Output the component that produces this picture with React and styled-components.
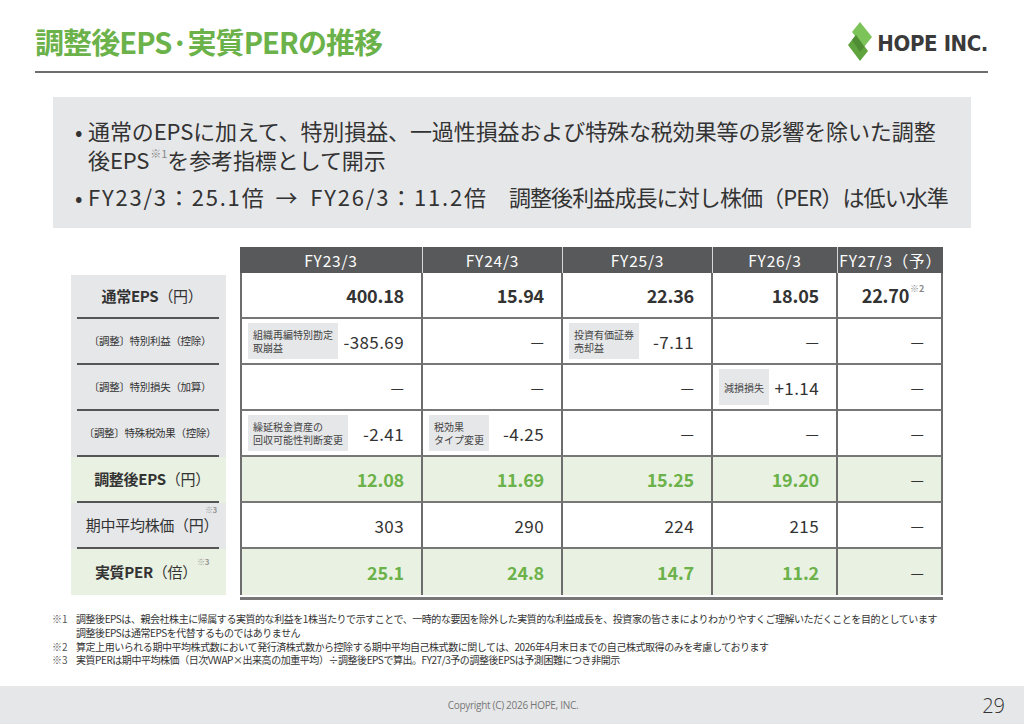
import React from "react";
import styled, { createGlobalStyle } from "styled-components";

const GlobalStyle = createGlobalStyle`
  html, body { margin: 0; padding: 0; background: #fff; }
  body { font-family: "Noto Sans CJK JP", "Noto Sans", sans-serif; color: #333; }
  * { box-sizing: border-box; }
`;

const GREEN = "#6cb24a";
const GRAY_BG = "#e6e7e9";
const GREEN_BG = "#e9f1e2";
const LINE = "#6d6d6d";

const Page = styled.div`
  width: 1024px;
  height: 724px;
  overflow: hidden;
  display: flex;
  flex-direction: column;
  background: #fff;
`;

const Header = styled.header`
  display: flex;
  align-items: center;
  justify-content: space-between;
  height: 38px;
  margin: 22px 36px 0 35px;
`;

const Title = styled.h1`
  margin: 0;
  font-size: 29px;
  line-height: 38px;
  font-weight: 700;
  color: ${GREEN};
  letter-spacing: -0.9px;
`;

const Logo = styled.div`
  display: flex;
  align-items: center;
  gap: 3px;
  margin-top: 1px;
`;

const LogoText = styled.span`
  font-family: "DejaVu Sans Condensed", "DejaVu Sans", sans-serif;
  font-stretch: condensed;
  font-weight: 700;
  font-size: 22px;
  letter-spacing: -0.4px;
  color: #3a3a3a;
  margin-top: 4px;
`;

const Rule = styled.div`
  height: 2px;
  background: ${LINE};
  margin: 11px 36px 0 35px;
`;

const Summary = styled.section`
  margin: 24px 53px 0 53px;
  height: 131px;
  background: ${GRAY_BG};
  padding: 19px 0 0 22px;
  display: flex;
  flex-direction: column;
  gap: 8px;
`;

const BulletItem = styled.div`
  display: flex;
  font-size: 22px;
  line-height: 29px;
  color: #333;
  white-space: nowrap;
  letter-spacing: -0.1px;
`;

const BulletMark = styled.span`
  width: 13px;
  flex: none;
`;

const Wide = styled.span`
  letter-spacing: 1.8px;
`;

const Tight = styled.span`
  letter-spacing: -0.9px;
`;

const Arrow = styled.span`
  padding: 0 13px 0 10px;
`;

const Sup = styled.sup`
  font-size: ${(p) => p.$size || 10}px;
  color: #888;
  vertical-align: top;
  line-height: 1;
  position: relative;
  top: ${(p) => p.$top || 4}px;
  margin-left: 1px;
`;

const TableArea = styled.section`
  display: flex;
  margin: 19px 0 0 71px;
`;

const LabelColumn = styled.div`
  width: 155px;
  margin: 28px 14px 0 0;
  display: flex;
  flex-direction: column;
`;

const LabelRow = styled.div`
  height: ${(p) => (p.$first ? 44 : 46)}px;
  background: ${(p) => (p.$green ? GREEN_BG : GRAY_BG)};
  padding: 0 7px 0 6px;
`;

const LabelInner = styled.div`
  height: 100%;
  display: flex;
  align-items: center;
  justify-content: center;
  position: relative;
  padding-left: ${(p) => (p.$small ? 4 : 8)}px;
  border-bottom: ${(p) => (p.$last ? "none" : "2px solid #555")};
  font-size: ${(p) => (p.$small ? 10.5 : 15)}px;
  line-height: 1.2;
  letter-spacing: -0.3px;
  color: #333;
  white-space: nowrap;
`;

const LabelStrong = styled.span`
  font-weight: 700;
`;

const LabelSupInline = styled.span`
  align-self: flex-start;
  font-size: 8px;
  line-height: 1;
  font-weight: 700;
  color: #999;
  margin-top: 9px;
  margin-left: 0;
`;

const LabelSupAbove = styled.span`
  position: absolute;
  right: 2px;
  top: 3px;
  font-size: 8px;
  line-height: 1;
  font-weight: 700;
  color: #999;
`;

const DataWrap = styled.div`
  width: 703px;
  padding-bottom: 2px;
  border-bottom: 3px solid #777;
`;

const DataGrid = styled.div`
  display: grid;
  grid-template-columns: 183px 140px 150px 125px 105px;
  grid-auto-rows: 46px;
  grid-template-rows: 26px;
`;

const HeadCell = styled.div`
  background: #58595b;
  color: #fff;
  font-size: 15.5px;
  letter-spacing: 0.8px;
  display: flex;
  align-items: center;
  justify-content: center;
  border-right: ${(p) => (p.$last ? "none" : "1px solid #d8d8d8")};
  white-space: nowrap;
`;

const Cell = styled.div`
  background: ${(p) => (p.$green ? GREEN_BG : "#fff")};
  border-right: 2px solid ${LINE};
  border-left: ${(p) => (p.$first ? `2px solid ${LINE}` : "none")};
  border-bottom: ${(p) => (p.$last ? "none" : `2px solid #777`)};
  display: flex;
  align-items: center;
  justify-content: ${(p) => (p.$tag ? "space-between" : "flex-end")};
  padding: 0 17px 0 6px;
  white-space: nowrap;
`;

const Tag = styled.span`
  background: ${GRAY_BG};
  font-size: 10px;
  line-height: 13px;
  color: #444;
  padding: 0 5px;
  height: 36px;
  display: flex;
  flex-direction: column;
  justify-content: center;
`;

const Value = styled.span`
  font-size: ${(p) => (p.$bold ? 18 : 17)}px;
  font-weight: ${(p) => (p.$bold ? 700 : 400)};
  color: ${(p) => (p.$green ? GREEN : "#333")};
  letter-spacing: ${(p) => (p.$bold ? "-0.2px" : "0.4px")};
`;

const Dash = styled.span`
  font-size: 15px;
  color: #333;
`;

const Notes = styled.section`
  margin: 12px 0 0 52px;
  display: flex;
  flex-direction: column;
`;

const Note = styled.div`
  display: flex;
  font-size: 10px;
  line-height: 13.8px;
  letter-spacing: -0.45px;
  color: #333;
  white-space: nowrap;
`;

const NoteMark = styled.span`
  width: 24px;
  flex: none;
  color: #555;
  letter-spacing: 0;
`;

const Footer = styled.footer`
  margin-top: auto;
  height: 38px;
  background: ${GRAY_BG};
  display: flex;
  align-items: center;
  justify-content: center;
  position: relative;
`;

const Copyright = styled.span`
  font-family: "Open Sans", "Noto Sans", sans-serif;
  font-size: 10px;
  letter-spacing: -0.3px;
  color: #777;
  margin-left: 2px;
`;

const PageNum = styled.span`
  position: absolute;
  right: 19px;
  top: 6px;
  font-family: "Open Sans", "Noto Sans", sans-serif;
  font-size: 20px;
  font-weight: 300;
  color: #333;
`;

const LogoMark = () => (
  <svg width="28" height="40" viewBox="0 0 28 40">
    <polygon points="14,0 26,15 18,25 6,10" fill="#7cc35a" />
    <polygon points="2,23 10,13 22,29 14,39" fill="#5fa43e" />
    <polygon points="10,13 18,25 14,30 6,18" fill="#4f8c33" />
  </svg>
);

const columns = ["FY23/3", "FY24/3", "FY25/3", "FY26/3", "FY27/3（予）"];
const D = { dash: true };

const rows = [
  {
    label: <><LabelStrong>通常EPS</LabelStrong>（円）</>,
    type: "base",
    cells: [{ v: "400.18" }, { v: "15.94" }, { v: "22.36" }, { v: "18.05" }, { v: "22.70", sup: "※2" }],
  },
  {
    label: "〔調整〕特別利益（控除）",
    type: "adj",
    cells: [{ tag: ["組織再編特別勘定", "取崩益"], v: "-385.69" }, D, { tag: ["投資有価証券", "売却益"], v: "-7.11" }, D, D],
  },
  {
    label: "〔調整〕特別損失（加算）",
    type: "adj",
    cells: [D, D, D, { tag: ["減損損失"], v: "+1.14" }, D],
  },
  {
    label: "〔調整〕特殊税効果（控除）",
    type: "adj",
    cells: [{ tag: ["繰延税金資産の", "回収可能性判断変更"], v: "-2.41" }, { tag: ["税効果", "タイプ変更"], v: "-4.25" }, D, D, D],
  },
  {
    label: <><LabelStrong>調整後EPS</LabelStrong>（円）</>,
    type: "green",
    cells: [{ v: "12.08" }, { v: "11.69" }, { v: "15.25" }, { v: "19.20" }, D],
  },
  {
    label: "期中平均株価（円）",
    type: "price",
    sup: "above",
    cells: [{ v: "303" }, { v: "290" }, { v: "224" }, { v: "215" }, D],
  },
  {
    label: <><LabelStrong>実質PER</LabelStrong>（倍）</>,
    type: "green",
    sup: "inline",
    cells: [{ v: "25.1" }, { v: "24.8" }, { v: "14.7" }, { v: "11.2" }, D],
  },
];

const notes = [
  ["※1", ["調整後EPSは、親会社株主に帰属する実質的な利益を1株当たりで示すことで、一時的な要因を除外した実質的な利益成長を、投資家の皆さまによりわかりやすくご理解いただくことを目的としています", "調整後EPSは通常EPSを代替するものではありません"]],
  ["※2", ["算定上用いられる期中平均株式数において発行済株式数から控除する期中平均自己株式数に関しては、2026年4月末日までの自己株式取得のみを考慮しております"]],
  ["※3", ["実質PERは期中平均株価（日次VWAP×出来高の加重平均）÷調整後EPSで算出。FY27/3予の調整後EPSは予測困難につき非開示"]],
];

function DataCell({ c, row, ci, ri }) {
  const green = row.type === "green";
  const bold = row.type === "base" || green;
  const last = ri === rows.length - 1;
  return (
    <Cell $green={green} $first={ci === 0} $last={last} $tag={!!c.tag}>
      {c.tag && (
        <Tag>
          {c.tag.map((t) => (
            <span key={t}>{t}</span>
          ))}
        </Tag>
      )}
      {c.dash ? (
        <Dash>—</Dash>
      ) : (
        <Value $bold={bold} $green={green}>
          {c.v}
          {c.sup && <Sup $size={9} $top={2}>{c.sup}</Sup>}
        </Value>
      )}
    </Cell>
  );
}

export default function App() {
  return (
    <Page>
      <GlobalStyle />
      <Header>
        <Title>調整後EPS·実質PERの推移</Title>
        <Logo>
          <LogoMark />
          <LogoText>HOPE INC.</LogoText>
        </Logo>
      </Header>
      <Rule />

      <Summary>
        <BulletItem>
          <BulletMark>•</BulletMark>
          <div>
            通常のEPSに加えて、特別損益、一過性損益および特殊な税効果等の影響を除いた調整
            <br />
            後EPS<Sup $size={11} $top={3}>※1</Sup>を参考指標として開示
          </div>
        </BulletItem>
        <BulletItem>
          <BulletMark>•</BulletMark>
          <div>
            <Wide>FY23/3：25.1倍</Wide>
            <Arrow>→</Arrow>
            <Wide>FY26/3：11.2倍</Wide>
            <Tight>　調整後利益成長に対し株価（PER）は低い水準</Tight>
          </div>
        </BulletItem>
      </Summary>

      <TableArea>
        <LabelColumn>
          {rows.map((r, i) => (
            <LabelRow key={i} $first={i === 0} $green={r.type === "green"}>
              <LabelInner $last={i === rows.length - 1} $small={r.type === "adj"}>
                {r.label}
                {r.sup === "inline" && <LabelSupInline>※3</LabelSupInline>}
                {r.sup === "above" && <LabelSupAbove>※3</LabelSupAbove>}
              </LabelInner>
            </LabelRow>
          ))}
        </LabelColumn>

        <DataWrap>
          <DataGrid>
            {columns.map((c, i) => (
              <HeadCell key={c} $last={i === columns.length - 1}>
                {c}
              </HeadCell>
            ))}
            {rows.map((r, ri) =>
              r.cells.map((c, ci) => <DataCell key={`${ri}-${ci}`} c={c} row={r} ci={ci} ri={ri} />)
            )}
          </DataGrid>
        </DataWrap>
      </TableArea>

      <Notes>
        {notes.map(([m, lines]) =>
          lines.map((l, i) => (
            <Note key={m + i}>
              <NoteMark>{i === 0 ? m : ""}</NoteMark>
              <span>{l}</span>
            </Note>
          ))
        )}
      </Notes>

      <Footer>
        <Copyright>Copyright (C) 2026 HOPE, INC.</Copyright>
        <PageNum>29</PageNum>
      </Footer>
    </Page>
  );
}
